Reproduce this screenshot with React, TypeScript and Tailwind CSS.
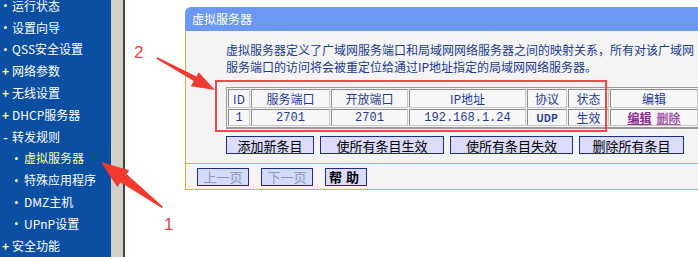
import React from 'react';

const FONT = { fontFamily: '"Noto Sans CJK SC", "Noto Sans", sans-serif' };

type NavItem = { label: string; mark: '•' | '+' | '-' | 'sub'; active?: boolean };

const navItems: NavItem[] = [
  { label: '运行状态', mark: '•' },
  { label: '设置向导', mark: '•' },
  { label: 'QSS安全设置', mark: '•' },
  { label: '网络参数', mark: '+' },
  { label: '无线设置', mark: '+' },
  { label: 'DHCP服务器', mark: '+' },
  { label: '转发规则', mark: '-' },
  { label: '虚拟服务器', mark: 'sub', active: true },
  { label: '特殊应用程序', mark: 'sub' },
  { label: 'DMZ主机', mark: 'sub' },
  { label: 'UPnP设置', mark: 'sub' },
  { label: '安全功能', mark: '+' },
];

const columns = [
  { title: 'ID', w: 'w-[22px]' },
  { title: '服务端口', w: 'w-[79px]' },
  { title: '开放端口', w: 'w-[77px]' },
  { title: 'IP地址', w: 'w-[117px]' },
  { title: '协议', w: 'w-[40px]' },
  { title: '状态', w: 'w-[41px]' },
  { title: '编辑', w: 'w-[88px]' },
];

const cell =
  'border border-t-[#8c8c8c] border-l-[#8c8c8c] border-r-[#c8c8c8] border-b-[#c8c8c8] bg-[#f7f7f7]';

const Sidebar: React.FC = () => (
  <div className="w-[111px] shrink-0 bg-[#0b4fa3] text-[12px] text-white">
    <ul className="-mt-[5px]">
      {navItems.map((item) => (
        <li key={item.label} className="h-[21.8px] flex items-center leading-none">
          {item.mark === 'sub' ? (
            <>
              <span className="ml-[15px] w-[3px] h-[3px] rounded-full bg-[#ffffcc]" />
              <span className={`ml-[6px] ${item.active ? 'text-[#ffff99]' : 'text-white'}`}>
                {item.label}
              </span>
            </>
          ) : (
            <>
              <span className="w-[11px] flex justify-center text-[#ffff88] font-bold">
                {item.mark === '•' ? (
                  <span className="block w-[3px] h-[3px] rounded-full bg-[#ffffcc]" />
                ) : (
                  item.mark
                )}
              </span>
              <span className="ml-[1px]">{item.label}</span>
            </>
          )}
        </li>
      ))}
    </ul>
  </div>
);

const Btn: React.FC<{ label: string; w: string; disabled?: boolean; bold?: boolean }> = ({
  label,
  w,
  disabled,
  bold,
}) => (
  <button
    className={`${w} h-[18px] border border-[#1e2d84] text-[13px] leading-none flex items-center justify-center ${
      disabled ? 'bg-[#d3dbf6] text-[#8c98c4]' : 'bg-[#dcdcfa] text-black'
    } ${bold ? 'font-bold tracking-[4px]' : ''}`}
  >
    {label}
  </button>
);

const Annotations: React.FC = () => (
  <>
    <div className="absolute left-[215px] top-[80px] w-[392px] h-[52px] border-2 border-[#ef4a4a] pointer-events-none" />
    <svg className="absolute inset-0 pointer-events-none" width="698" height="257">
      {/* arrow 2 */}
      <polygon points="157.5,57.2 156.5,58.8 195.5,82 197.5,77" fill="#f23a2e" />
      <polygon points="215,90 198.7,72.2 190.9,86.2" fill="#f23a2e" />
      {/* arrow 1 */}
      <polygon points="163,206.7 161.8,208 120.5,182.2 126.5,174" fill="#f23a2e" />
      <polygon points="101,162 129.3,170.3 117.2,187" fill="#f23a2e" />
      <text x="134" y="58" fill="#e8403a" fontSize="17" fontFamily="Liberation Sans, sans-serif">2</text>
      <text x="164" y="230" fill="#e8403a" fontSize="17" fontFamily="Liberation Sans, sans-serif">1</text>
    </svg>
  </>
);

const App: React.FC = () => {
  return (
    <div className="relative w-[698px] h-[257px] overflow-hidden bg-white flex" style={FONT}>
      <Sidebar />
      <div className="w-[12px] shrink-0 bg-[#d4d0c8]" />
      <div className="w-[2px] shrink-0 bg-[#45433f]" />
      <div className="flex-1 pl-[60px] pt-[7px]">
        <div className="w-[540px]">
          <div className="h-[24px] bg-[#6a98f4] rounded-tl-[6px] flex items-center pl-[7px] text-[12px] text-white leading-none">
            虚拟服务器
          </div>
          <div className="border-l border-[#f0a24a] bg-[#f4f4f4]">
            <div className="pl-[40px] pt-[10px] pb-[9px]">
              <p className="text-[12px] leading-[17px] text-[#1b3a8e] w-[470px]">
                虚拟服务器定义了广域网服务端口和局域网网络服务器之间的映射关系，所有对该广域网服务端口的访问将会被重定位给通过IP地址指定的局域网网络服务器。
              </p>
              <table className="mt-[12px] border-separate border-spacing-[1px] border border-[#9a9a9a] border-b-2 border-r-2 bg-[#f4f4f4] text-[12px] text-[#1f3a96] leading-none">
                <thead>
                  <tr className="h-[19px]">
                    {columns.map((c) => (
                      <th key={c.title} className={`${c.w} font-normal ${cell}`}>
                        {c.title}
                      </th>
                    ))}
                  </tr>
                </thead>
                <tbody>
                  <tr className="h-[17px] text-center">
                    {['1', '2701', '2701', '192.168.1.24'].map((v, i) => (
                      <td key={i} className={cell} style={{ fontFamily: '"Liberation Mono", monospace' }}>
                        {v}
                      </td>
                    ))}
                    <td className={`${cell} text-[10px] font-bold`}>UDP</td>
                    <td className={cell}>生效</td>
                    <td className={cell}>
                      <a className="text-[#8d2a8f] underline font-bold">编辑</a>
                      <a className="ml-[5px] text-[#a55aa8] underline font-bold">删除</a>
                    </td>
                  </tr>
                </tbody>
              </table>
              <div className="mt-[7px] flex gap-[6px]">
                <Btn label="添加新条目" w="w-[88px]" />
                <Btn label="使所有条目生效" w="w-[124px]" />
                <Btn label="使所有条目失效" w="w-[123px]" />
                <Btn label="删除所有条目" w="w-[105px]" />
              </div>
            </div>
            <div className="border-t border-b border-[#f0a24a] h-[27px] flex items-center pl-[11px] gap-[12px]">
              <Btn label="上一页" w="w-[52px]" disabled />
              <Btn label="下一页" w="w-[52px]" disabled />
              <Btn label="帮助" w="w-[42px]" bold />
            </div>
          </div>
        </div>
      </div>
      <Annotations />
    </div>
  );
};

export default App;
